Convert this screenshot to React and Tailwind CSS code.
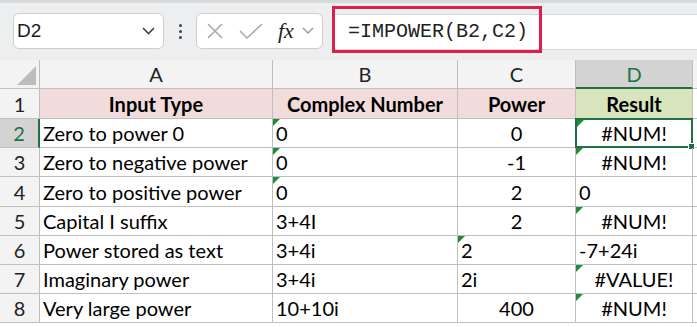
import React from "react";

const FONT = { fontFamily: "Lato, 'Liberation Sans', sans-serif" };

const rows = [
  { n: 2, a: "Zero to power 0", b: "0", bt: true, c: "0", cAlign: "center", d: "#NUM!", dAlign: "center", dt: true },
  { n: 3, a: "Zero to negative power", b: "0", bt: true, c: "-1", cAlign: "center", d: "#NUM!", dAlign: "center", dt: true },
  { n: 4, a: "Zero to positive power", b: "0", bt: true, c: "2", cAlign: "center", d: "0", dAlign: "left" },
  { n: 5, a: "Capital I suffix", b: "3+4I", c: "2", cAlign: "center", d: "#NUM!", dAlign: "center", dt: true },
  { n: 6, a: "Power stored as text", b: "3+4i", c: "2", cAlign: "left", ct: true, d: "-7+24i", dAlign: "left" },
  { n: 7, a: "Imaginary power", b: "3+4i", c: "2i", cAlign: "left", d: "#VALUE!", dAlign: "center", dt: true },
  { n: 8, a: "Very large power", b: "10+10i", c: "400", cAlign: "center", d: "#NUM!", dAlign: "center", dt: true },
];

function Tri() {
  return (
    <svg className="absolute left-0 top-0" width="7" height="7" viewBox="0 0 7 7">
      <polygon points="0,0 7,0 0,7" fill="#1f8a3a" />
    </svg>
  );
}

function Cell({ children, align = "left", tri, className = "" }) {
  const al = align === "center" ? "justify-center" : "justify-start pl-[3px]";
  return (
    <div className={`relative flex items-center border-r border-b border-[#bfbfbf] text-[20px] text-black ${al} ${className}`}>
      {tri && <Tri />}
      {children}
    </div>
  );
}

export default function App() {
  return (
    <div className="w-[697px] h-[327px] overflow-hidden bg-white" style={FONT}>
      {/* formula bar */}
      <div className="relative flex h-[60px] items-start border-t-[3px] border-[#d6d8da] bg-[#eceef0] pt-[10px]">
        <div className="ml-[13px] flex h-[36px] w-[151px] items-center justify-between rounded-[6px] border border-[#cdcdcd] bg-white pl-[3px] pr-[8px]">
          <span className="text-[19px] text-[#1a1a1a]" style={{ fontFamily: "'Liberation Sans', sans-serif" }}>D2</span>
          <svg width="13" height="8" viewBox="0 0 13 8"><polyline points="1,1 6.5,6.5 12,1" fill="none" stroke="#444" strokeWidth="1.6" /></svg>
        </div>
        <div className="ml-[15px] mr-[14px] flex h-[36px] flex-col items-center justify-center gap-[3px]">
          <span className="h-[3px] w-[3px] rounded-full bg-[#444]" />
          <span className="h-[3px] w-[3px] rounded-full bg-[#444]" />
          <span className="h-[3px] w-[3px] rounded-full bg-[#444]" />
        </div>
        <div className="flex h-[36px] w-[127px] items-center rounded-[6px] border border-[#cdcdcd] bg-white pl-[10px]">
          <svg width="16" height="16" viewBox="0 0 16 16"><path d="M1 1 L15 15 M15 1 L1 15" stroke="#a8a8a8" strokeWidth="1.5" /></svg>
          <svg className="ml-[16px]" width="24" height="16" viewBox="0 0 24 16"><polyline points="1,8 8,15 23,1" fill="none" stroke="#a8a8a8" strokeWidth="1.5" /></svg>
          <span className="ml-[15px] text-[22px] italic leading-none text-[#222]" style={{ fontFamily: "'Liberation Serif', serif" }}>fx</span>
          <svg className="ml-[8px]" width="12" height="8" viewBox="0 0 12 8"><polyline points="1,1 6,6 11,1" fill="none" stroke="#999" strokeWidth="1.4" /></svg>
        </div>
        <div className="ml-[9px] mt-[1px] flex h-[36px] flex-1 items-center border-y border-l border-[#d6d6d6] bg-white pl-[15px]">
          <span className="text-[20px] text-[#222]" style={{ fontFamily: "'Liberation Mono', monospace" }}>=IMPOWER(B2,C2)</span>
        </div>
        <div className="absolute left-[332px] top-[3px] h-[47px] w-[210px] border-[3px] border-[#dc1f4b]" />
      </div>

      {/* grid */}
      <div className="grid grid-cols-[40px_233px_185px_118px_117px_1fr] grid-rows-[29px_30px_29px_29px_30px_29px_29px_29px_29px]">
        {/* column headers */}
        <div className="relative border-r border-b border-[#bfbfbf] bg-[#f3f3f3]">
          <svg className="absolute bottom-[3px] right-[3px]" width="19" height="19" viewBox="0 0 19 19"><polygon points="19,0 19,19 0,19" fill="#bdbdbd" /></svg>
        </div>
        {["A", "B", "C"].map((l) => (
          <div key={l} className="flex items-center justify-center border-r border-b border-[#bfbfbf] bg-[#f3f3f3] text-[20px] text-[#222]">{l}</div>
        ))}
        <div className="flex items-center justify-center border-r border-b-2 border-r-[#bfbfbf] border-b-[#1e7145] bg-[#d3d3d3] text-[20px] text-[#1e7145]">D</div>
        <div className="border-b border-[#bfbfbf] bg-[#f3f3f3]" />

        {/* row 1 */}
        <div className="flex items-center justify-center border-r border-b border-[#bfbfbf] bg-[#f3f3f3] text-[20px] text-[#222]">1</div>
        {["Input Type", "Complex Number", "Power"].map((h) => (
          <div key={h} className="flex items-center justify-center border-r border-b border-[#bfbfbf] bg-[#f2dcdb] text-[20px] font-bold text-black">{h}</div>
        ))}
        <div className="flex items-center justify-center border-r border-b border-[#bfbfbf] bg-[#d8e4bc] text-[20px] font-bold text-black">Result</div>
        <div className="border-b border-[#bfbfbf]" />

        {rows.map((r) => (
          <React.Fragment key={r.n}>
            <div
              className={`flex items-center justify-center border-b border-[#bfbfbf] text-[20px] ${
                r.n === 2 ? "border-r-2 border-r-[#1e7145] bg-[#d3d3d3] text-[#1e7145]" : "border-r bg-[#f3f3f3] text-[#222]"
              }`}
            >
              {r.n}
            </div>
            <Cell>{r.a}</Cell>
            <Cell tri={r.bt}>{r.b}</Cell>
            <Cell align={r.cAlign} tri={r.ct}>{r.c}</Cell>
            {r.n === 2 ? (
              <div className="relative -ml-px -mt-px flex items-center justify-center border-2 border-[#1e7145] text-[20px] text-black">
                <Tri />
                {r.d}
                <span className="absolute -bottom-[4px] -right-[4px] h-[7px] w-[7px] border border-white bg-[#1e7145]" />
              </div>
            ) : (
              <Cell align={r.dAlign} tri={r.dt}>{r.d}</Cell>
            )}
            <div className="border-b border-[#bfbfbf]" />
          </React.Fragment>
        ))}
      </div>
    </div>
  );
}
